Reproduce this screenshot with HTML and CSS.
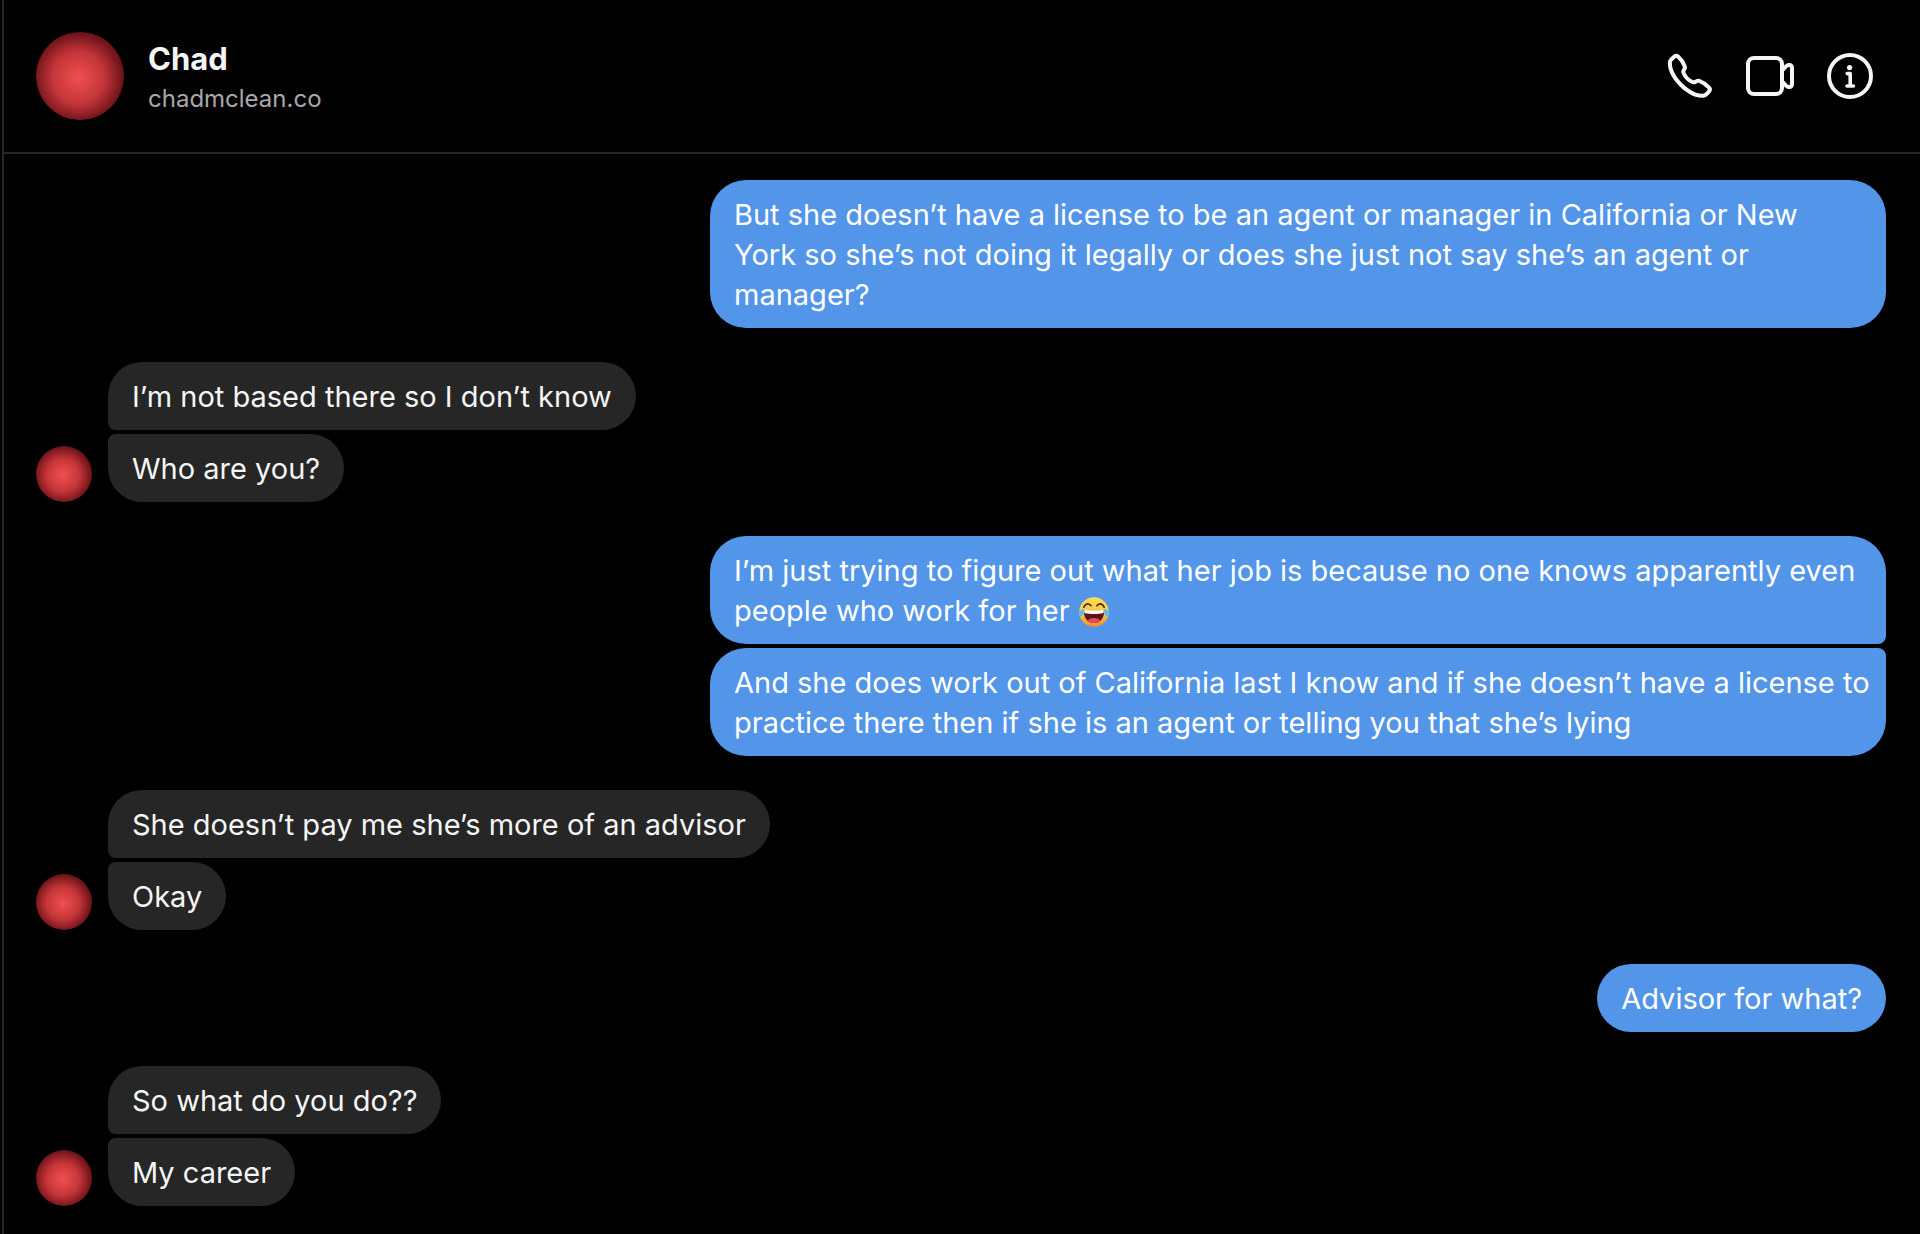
FILE: index.html
```
<!DOCTYPE html>
<html lang="en">

<head>
  <meta charset="UTF-8">
  <meta name="viewport" content="width=device-width, initial-scale=1.0">
  <title>Chad</title>
  <link rel="stylesheet" href="styles.css">
</head>

<body>

  <div class="chat">
    <header class="header">
      <a href="#" class="header__user">
        <span class="avatar avatar_large"></span>
        <span class="header__text">
          <span class="header__name">Chad</span>
          <span class="header__login">chadmclean.co</span>
        </span>
      </a>
      <div class="header__actions">
        <button type="button" class="header__button" aria-label="Audio call">
          <svg class="icon" viewBox="0 0 24 24" fill="currentColor">
            <path d="M18.227 22.912c-4.913 0-9.286-3.627-11.486-5.828C4.486 14.83.731 10.291.921 5.231a3.289 3.289 0 0 1 .908-2.138 17.116 17.116 0 0 1 1.865-1.71 2.307 2.307 0 0 1 3.004.174 13.283 13.283 0 0 1 3.658 5.325 2.551 2.551 0 0 1-.19 1.941l-.455.853a.463.463 0 0 0-.024.387 7.57 7.57 0 0 0 4.077 4.075.455.455 0 0 0 .386-.024l.853-.455a2.548 2.548 0 0 1 1.94-.19 13.278 13.278 0 0 1 5.326 3.658 2.309 2.309 0 0 1 .174 3.003 17.319 17.319 0 0 1-1.71 1.866 3.29 3.29 0 0 1-2.138.91 10.27 10.27 0 0 1-.368.006Zm-13.144-20a.27.27 0 0 0-.167.054A15.121 15.121 0 0 0 3.28 4.47a1.289 1.289 0 0 0-.36.836c-.161 4.301 3.21 8.34 5.235 10.364s6.06 5.403 10.366 5.236a1.284 1.284 0 0 0 .835-.36 15.217 15.217 0 0 0 1.504-1.637.324.324 0 0 0-.047-.41 11.62 11.62 0 0 0-4.457-3.119.545.545 0 0 0-.411.044l-.854.455a2.452 2.452 0 0 1-2.071.116 9.571 9.571 0 0 1-5.189-5.188 2.457 2.457 0 0 1 .115-2.071l.456-.855a.544.544 0 0 0 .043-.41 11.629 11.629 0 0 0-3.118-4.458.36.36 0 0 0-.244-.1Z" />
          </svg>
        </button>
        <button type="button" class="header__button" aria-label="Video call">
          <svg class="icon" viewBox="0 0 24 24" fill="none" stroke="currentColor" stroke-width="2" stroke-linejoin="round">
            <rect x="1" y="3" width="17" height="18" rx="3" />
            <path d="M18 9.3 20 7.2C21.2 5.9 23 6.4 23 8v8c0 1.6-1.8 2.1-3 .8l-2-2.1" />
          </svg>
        </button>
        <button type="button" class="header__button" aria-label="Conversation information">
          <svg class="icon" viewBox="0 0 24 24" fill="none" stroke="currentColor" stroke-width="2" stroke-linecap="round" stroke-linejoin="round">
            <circle cx="12" cy="12" r="10.5" />
            <circle cx="11.8" cy="7.8" r="1.3" fill="currentColor" stroke="none" />
            <path stroke-width="1.8" d="M10.6 10.8h1.5V17M10.5 17h3.2" />
          </svg>
        </button>
      </div>
    </header>

    <main class="messages">
      <div class="group group_sent">
        <p class="bubble">But she doesn’t have a license to be an agent or manager in California or New York so she’s not doing it legally or does she just not say she’s an agent or manager?</p>
      </div>

      <div class="group">
        <span class="avatar"></span>
        <div class="group__list">
          <p class="bubble">I’m not based there so I don’t know</p>
          <p class="bubble">Who are you?</p>
        </div>
      </div>

      <div class="group group_sent">
        <div class="group__list">
          <p class="bubble bubble_long">I’m just trying to figure out what her job is because no one knows apparently even people who work for her <svg class="emoji" viewBox="0 0 32 30" role="img" aria-label="Face with tears of joy">
              <defs>
                <linearGradient id="face" x1="0" y1="0" x2="0" y2="1">
                  <stop offset="0" stop-color="#fbe05a" />
                  <stop offset="0.6" stop-color="#fbc23f" />
                  <stop offset="1" stop-color="#ef8a2f" />
                </linearGradient>
              </defs>
              <circle cx="16" cy="15" r="14.8" fill="url(#face)" />
              <path d="M5.8 10.2c1.4-3.4 4-4.4 7.2-1.6M19 8.6c3.2-2.8 5.8-1.8 7.2 1.6" fill="none" stroke="#4a2a12" stroke-width="1.7" stroke-linecap="round" />
              <path d="M6 13c6 1.4 14 1.4 20 0 .8 7-3.4 13-10 13S5.200 20 6 13Z" fill="#5c1414" />
              <path d="M6.5 12.8c6 1.4 13 1.4 19 0 .6 1.6.2 3-.6 3.4-5 1-12.8 1-17.8 0-.8-.4-1.2-1.8-.6-3.4Z" fill="#fff" />
              <path d="M10 23.4c2.400-3.200 9.600-3.200 12 0-3.200 3.500-8.800 3.500-12 0Z" fill="#e8475c" />
              <path d="M6.2 12C3 12.5.2 15 .3 17.500c.1 2.200 3 2.700 4.300.8C5.700 16.700 5.800 14 6.200 12ZM25.800 12c3.200.5 6 3 5.900 5.500-.1 2.200-3 2.700-4.300.8-1.100-1.600-1.200-4.300-1.600-6.300Z" fill="#5cb8ee" />
            </svg></p>
          <p class="bubble bubble_long">And she does work out of California last I know and if she doesn’t have a license to practice there then if she is an agent or telling you that she’s lying</p>
        </div>
      </div>

      <div class="group">
        <span class="avatar"></span>
        <div class="group__list">
          <p class="bubble">She doesn’t pay me she’s more of an advisor</p>
          <p class="bubble">Okay</p>
        </div>
      </div>

      <div class="group group_sent">
        <p class="bubble">Advisor for what?</p>
      </div>

      <div class="group">
        <span class="avatar"></span>
        <div class="group__list">
          <p class="bubble">So what do you do??</p>
          <p class="bubble">My career</p>
        </div>
      </div>
    </main>
  </div>

</body>
</html>
```
FILE: styles.css
```
* {
  box-sizing: border-box;
}

body {
  margin: 0;
  background-color: #000;
  color: #f5f5f5;
  font-family: Inter, "Liberation Sans", sans-serif;
}

.chat {
  min-height: 100vh;
  margin-left: 2px;
  border-left: 2px solid #262626;
}

.header {
  display: flex;
  align-items: center;
  justify-content: space-between;
  padding: 32px 46px 32px 32px;
  border-bottom: 2px solid #262626;
}

.header__user {
  display: flex;
  align-items: center;
  gap: 24px;
  color: inherit;
  text-decoration: none;
}

.header__text {
  display: flex;
  flex-direction: column;
  gap: 2px;
  padding-top: 4px;
}

.header__name {
  font-size: 31px;
  font-weight: 700;
  line-height: 40px;
}

.header__login {
  color: #a8a8a8;
  font-size: 24px;
  line-height: 36px;
}

.header__actions {
  display: flex;
  gap: 32px;
}

.header__button {
  padding: 0;
  border: none;
  background: none;
  color: #f5f5f5;
  cursor: pointer;
}

.icon {
  display: block;
  width: 48px;
  height: 48px;
}

.avatar {
  flex-shrink: 0;
  width: 56px;
  height: 56px;
  border-radius: 50%;
  background: radial-gradient(circle at 48% 52%, #f05050 0%, #c43538 40%, #6a1218 70%);
}

.avatar_large {
  width: 88px;
  height: 88px;
}

.messages {
  display: flex;
  flex-direction: column;
  gap: 34px;
  padding: 26px 34px 28px 32px;
}

.group {
  display: flex;
  align-items: flex-end;
  gap: 16px;
}

.group_sent {
  justify-content: flex-end;
}

.group__list {
  display: flex;
  flex-direction: column;
  align-items: flex-start;
  gap: 4px;
}

.group_sent .group__list {
  align-items: flex-end;
}

.bubble {
  max-width: 1176px;
  margin: 0;
  padding: 15px 24px 13px;
  border-radius: 36px;
  background-color: #262626;
  font-size: 29px;
  line-height: 40px;
}

.bubble_long {
  padding-right: 16px;
}

.group_sent .bubble {
  background-color: #5295e9;
  color: #fff;
}

/* corners where two bubbles of one group meet */
.group__list .bubble:first-child {
  border-bottom-left-radius: 8px;
}

.group__list .bubble:last-child {
  border-top-left-radius: 8px;
}

.group_sent .group__list .bubble:first-child {
  border-radius: 36px 36px 8px 36px;
}

.group_sent .group__list .bubble:last-child {
  border-radius: 36px 8px 36px 36px;
}

.emoji {
  width: 32px;
  height: 30px;
  vertical-align: -6px;
}
```
